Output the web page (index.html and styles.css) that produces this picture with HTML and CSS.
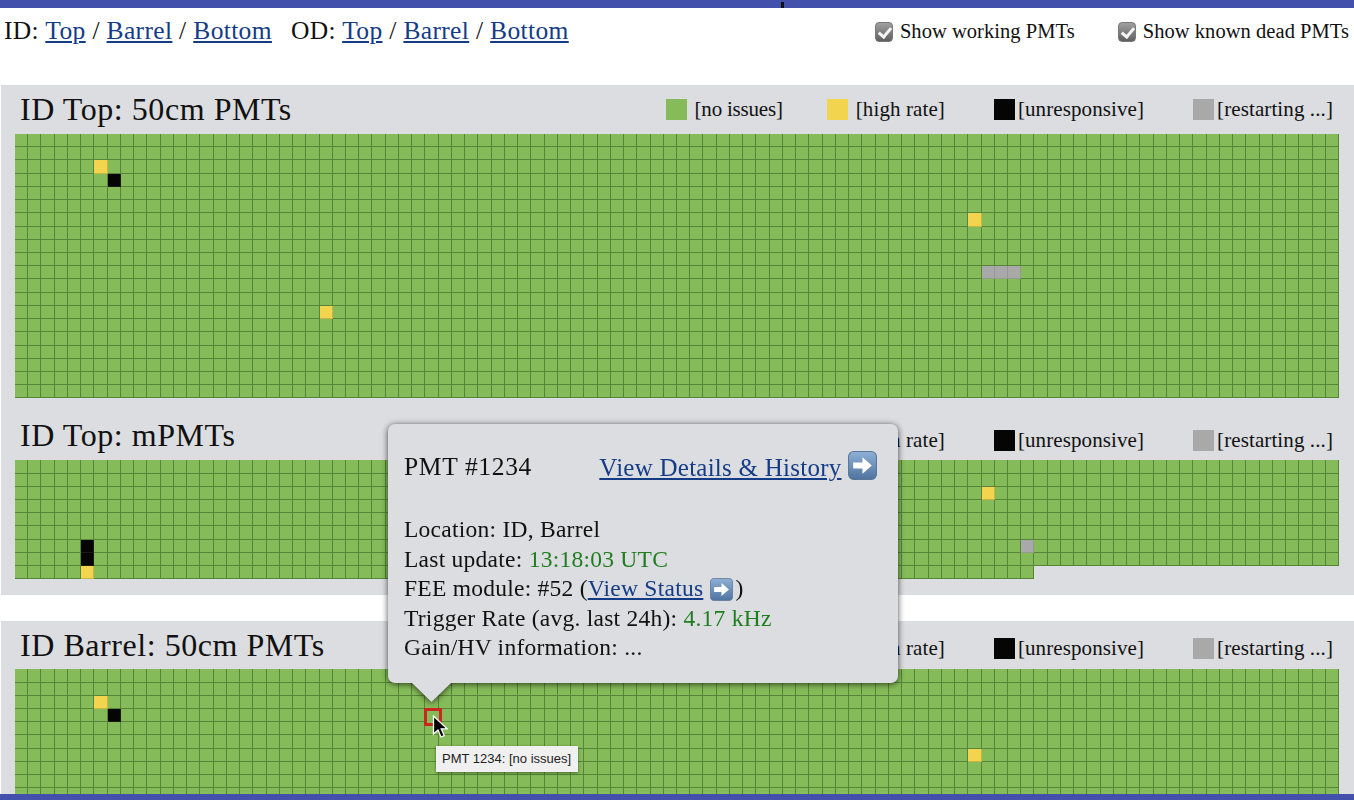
FILE: index.html
```html
<!DOCTYPE html>
<html lang="en">
<head>
    <meta charset="UTF-8">
    <title>PMT Status</title>
    <link rel="stylesheet" href="styles.css">
</head>
<body>
    <svg class="sprite" width="0" height="0">
        <defs>
            <linearGradient id="arrowBg" x1="0" y1="0" x2="0" y2="1">
                <stop offset="0" stop-color="#8fb0d6"/>
                <stop offset="1" stop-color="#4f739f"/>
            </linearGradient>
        </defs>
        <symbol id="arrowIcon" viewBox="0 0 28 28">
            <rect x="0.5" y="0.5" width="27" height="27" rx="5" fill="url(#arrowBg)" stroke="#5a7698"/>
            <path d="M5 11h9V6l9 8-9 8v-5H5z" fill="#fff"/>
        </symbol>
    </svg>

    <div class="top-bar"><span class="top-tick"></span></div>

    <nav class="top-nav">
        <div class="nav-links">
            <span>ID: <a href="#">Top</a> / <a href="#">Barrel</a> / <a href="#">Bottom</a></span>
            <span>OD: <a href="#">Top</a> / <a href="#">Barrel</a> / <a href="#">Bottom</a></span>
        </div>
        <div class="nav-filters">
            <label class="filter"><input type="checkbox" checked> Show working PMTs</label>
            <label class="filter"><input type="checkbox" checked> Show known dead PMTs</label>
        </div>
    </nav>

    <div class="panel">
        <div class="panel-head">
            <h2>ID Top: 50cm PMTs</h2>
            <div class="legend">
                <span class="legend-item first"><i class="swatch ok"></i>[no issues]</span>
                <span class="legend-item"><i class="swatch high"></i>[high rate]</span>
                <span class="legend-item tight"><i class="swatch dead"></i>[unresponsive]</span>
                <span class="legend-item tight"><i class="swatch wait"></i>[restarting ...]</span>
            </div>
        </div>
        <div class="pmt-grid spaced" id="topLarge"></div>

        <div class="panel-head">
            <h2>ID Top: mPMTs</h2>
            <div class="legend low">
                <span class="legend-item first"><i class="swatch ok"></i>[no issues]</span>
                <span class="legend-item"><i class="swatch high"></i>[high rate]</span>
                <span class="legend-item tight"><i class="swatch dead"></i>[unresponsive]</span>
                <span class="legend-item tight"><i class="swatch wait"></i>[restarting ...]</span>
            </div>
        </div>
        <div class="pmt-grid" id="topSmall"></div>
    </div>

    <div class="panel last">
        <div class="panel-head short">
            <h2>ID Barrel: 50cm PMTs</h2>
            <div class="legend lower">
                <span class="legend-item first"><i class="swatch ok"></i>[no issues]</span>
                <span class="legend-item"><i class="swatch high"></i>[high rate]</span>
                <span class="legend-item tight"><i class="swatch dead"></i>[unresponsive]</span>
                <span class="legend-item tight"><i class="swatch wait"></i>[restarting ...]</span>
            </div>
        </div>
        <div class="pmt-grid" id="barrelLarge"></div>
    </div>

    <div class="popover">
        <div class="popover-head">
            <span class="pmt-name">PMT #1234</span>
            <span><a href="#">View Details &amp; History</a> <svg class="arrow-big"><use href="#arrowIcon"/></svg></span>
        </div>
        <div>Location: ID, Barrel</div>
        <div>Last update: <span class="good">13:18:03 UTC</span></div>
        <div>FEE module: #52 (<a href="#">View Status</a> <svg class="arrow-small"><use href="#arrowIcon"/></svg>)</div>
        <div>Trigger Rate (avg. last 24h): <span class="good">4.17 kHz</span></div>
        <div>Gain/HV information: ...</div>
    </div>

    <div class="tooltip">PMT 1234: [no issues]</div>

    <svg class="cursor" viewBox="0 0 16 24">
        <path d="M1.5 1v18l4.5-4 3 7 3.2-1.4-3-6.8h6z" fill="#000" stroke="#fff" stroke-width="1.3"/>
    </svg>

    <div class="bottom-bar"></div>

    <script src="app.js"></script>
</body>
</html>
```

FILE: styles.css
```css
html, body {
    height: 100%;
    overflow: hidden;
}
body {
    display: flex;
    flex-direction: column;
    margin: 0;
    background-color: #fff;
    color: #111;
    font-family: "Liberation Serif", serif;
    font-size: 25.5px;
}
a {
    color: #143c86;
}
.sprite {
    display: block;
    flex: none;
    height: 0;
}
.top-bar {
    flex: none;
    height: 8px;
    background-color: #4351ac;
}
.top-tick {
    position: absolute;
    left: 781px;
    top: 2px;
    width: 3px;
    height: 6px;
    background-color: #111;
}
.bottom-bar {
    position: fixed;
    z-index: 2;
    left: 0;
    right: 0;
    bottom: 0;
    height: 6px;
    background-color: #4351ac;
}
.top-nav {
    display: flex;
    flex: none;
    justify-content: space-between;
    height: 77px;
    padding: 8px 5px 0 4px;
    box-sizing: border-box;
}
.nav-links {
    display: flex;
    gap: 19px;
    letter-spacing: 0.35px;
}
.nav-filters {
    display: flex;
    gap: 43px;
    padding-top: 4px;
    font-size: 20.5px;
}
.filter {
    display: flex;
    align-items: flex-start;
    gap: 7px;
    letter-spacing: 0.05px;
}
.filter input {
    appearance: none;
    position: relative;
    width: 18px;
    height: 20px;
    margin: 2px 0 0;
    border: 1px solid #777;
    border-radius: 4px;
    background: linear-gradient(#a0a0a0, #5f5f5f);
}
.filter input::after {
    content: "";
    position: absolute;
    left: 5px;
    top: 2px;
    width: 5px;
    height: 10px;
    border: solid #f4f4f4;
    border-width: 0 3px 3px 0;
    transform: rotate(40deg);
}
.panel {
    flex: none;
    margin: 0 0 26px 1px;
    padding: 0 15px 16px 14px;
    background-color: #dcdde0;
}
.panel.last {
    flex: 1;
    min-height: 0;
    overflow: hidden;
    margin-bottom: 0;
    padding-bottom: 0;
}
.panel-head {
    display: flex;
    justify-content: space-between;
    align-items: center;
    height: 49px;
    padding: 0 6px 0 5px;
}
.panel-head.short {
    height: 48px;
}
.panel-head h2 {
    margin: 0;
    font-size: 32px;
    font-weight: normal;
    letter-spacing: 0.55px;
}
.legend {
    display: flex;
    align-items: center;
    gap: 44px;
    font-size: 21px;
    letter-spacing: 0.1px;
}
.legend.low {
    padding-top: 10px;
}
.legend.lower {
    padding-top: 7px;
}
.legend-item {
    display: flex;
    align-items: center;
    gap: 8px;
}
.legend-item.first {
    letter-spacing: -0.2px;
}
.legend-item.tight {
    gap: 3px;
    margin-left: 5px;
}
.swatch {
    display: block;
    width: 21px;
    height: 21px;
}
.swatch.ok {
    background-color: #85bb58;
}
.swatch.high {
    background-color: #f2d44e;
}
.swatch.dead {
    background-color: #050505;
}
.swatch.wait {
    background-color: #a8a9a8;
}
.pmt-grid {
    display: grid;
    grid-template-columns: repeat(100, 1fr);
    grid-auto-rows: 13.22px;
}
.pmt-grid.spaced {
    margin-bottom: 13px;
}
.cell {
    position: relative;
    box-sizing: border-box;
    border-right: 1px solid #568539;
    border-bottom: 1px solid #568539;
    background-color: #85bb58;
}
.cell.high {
    background-color: #f2d44e;
    border-color: #c9b345;
}
.cell.dead {
    background-color: #050505;
    border-color: #1a1a12;
}
.cell.wait {
    background-color: #a8a9a8;
    border-color: #959a90;
}
.cell.selected {
    z-index: 1;
    margin: -1px -3px -4px -1px;
    border: 3px solid #c8281e;
    background-color: #85bb58;
}
.popover {
    position: absolute;
    z-index: 2;
    left: 388px;
    top: 424px;
    width: 510px;
    height: 259px;
    box-sizing: border-box;
    padding: 27px 21px 0 16px;
    border-radius: 7px;
    background-color: #dcdde0;
    filter: drop-shadow(0 1px 3px rgba(0, 0, 0, 0.7));
    font-size: 23.5px;
    line-height: 29.4px;
    letter-spacing: 0.25px;
}
.popover::after {
    content: "";
    position: absolute;
    left: 24px;
    bottom: -19px;
    width: 39px;
    height: 19px;
    background-color: #dcdde0;
    clip-path: polygon(0 0, 100% 0, 50% 100%);
}
.popover-head {
    display: flex;
    justify-content: space-between;
    align-items: center;
    margin-bottom: 33px;
    font-size: 25px;
}
.pmt-name {
    font-size: 25.5px;
    letter-spacing: 0.65px;
}
.good {
    color: #1e7d1e;
}
.arrow-big {
    width: 29px;
    height: 29px;
    vertical-align: -4px;
}
.arrow-small {
    width: 23px;
    height: 23px;
    margin: 0 2px 0 1px;
    vertical-align: -5px;
}
.tooltip {
    position: absolute;
    z-index: 2;
    left: 436px;
    top: 746px;
    width: 142px;
    height: 26px;
    box-sizing: border-box;
    padding-left: 6px;
    background-color: #f0f0f0;
    box-shadow: 0 1px 3px rgba(0, 0, 0, 0.45);
    color: #222;
    font-family: "Liberation Sans", sans-serif;
    font-size: 13px;
    line-height: 26px;
    white-space: nowrap;
}
.cursor {
    position: absolute;
    z-index: 3;
    left: 432px;
    top: 715px;
    width: 16px;
    height: 24px;
}
```

FILE: app.js
```js
// status cells as [row, col, status]
var grids = {
    topLarge: {
        count: 2000,
        cells: [[2, 6, 'high'], [3, 7, 'dead'], [6, 72, 'high'], [10, 73, 'wait'],
                [10, 74, 'wait'], [10, 75, 'wait'], [13, 23, 'high']]
    },
    topSmall: {
        count: 877,
        cells: [[2, 73, 'high'], [6, 5, 'dead'], [7, 5, 'dead'], [8, 5, 'high'], [6, 76, 'wait']]
    },
    barrelLarge: {
        count: 1000,
        cells: [[2, 6, 'high'], [3, 7, 'dead'], [3, 31, 'selected'], [6, 72, 'high']]
    }
};

Object.keys(grids).forEach(function(id) {
    var grid = document.getElementById(id);
    var statuses = {};

    grids[id].cells.forEach(function(c) {
        statuses[c[0] * 100 + c[1]] = c[2];
    });

    for (var i = 0; i < grids[id].count; i++) {
        var cell = document.createElement('div');
        cell.className = statuses[i] ? 'cell ' + statuses[i] : 'cell';
        grid.appendChild(cell);
    }
});
```
